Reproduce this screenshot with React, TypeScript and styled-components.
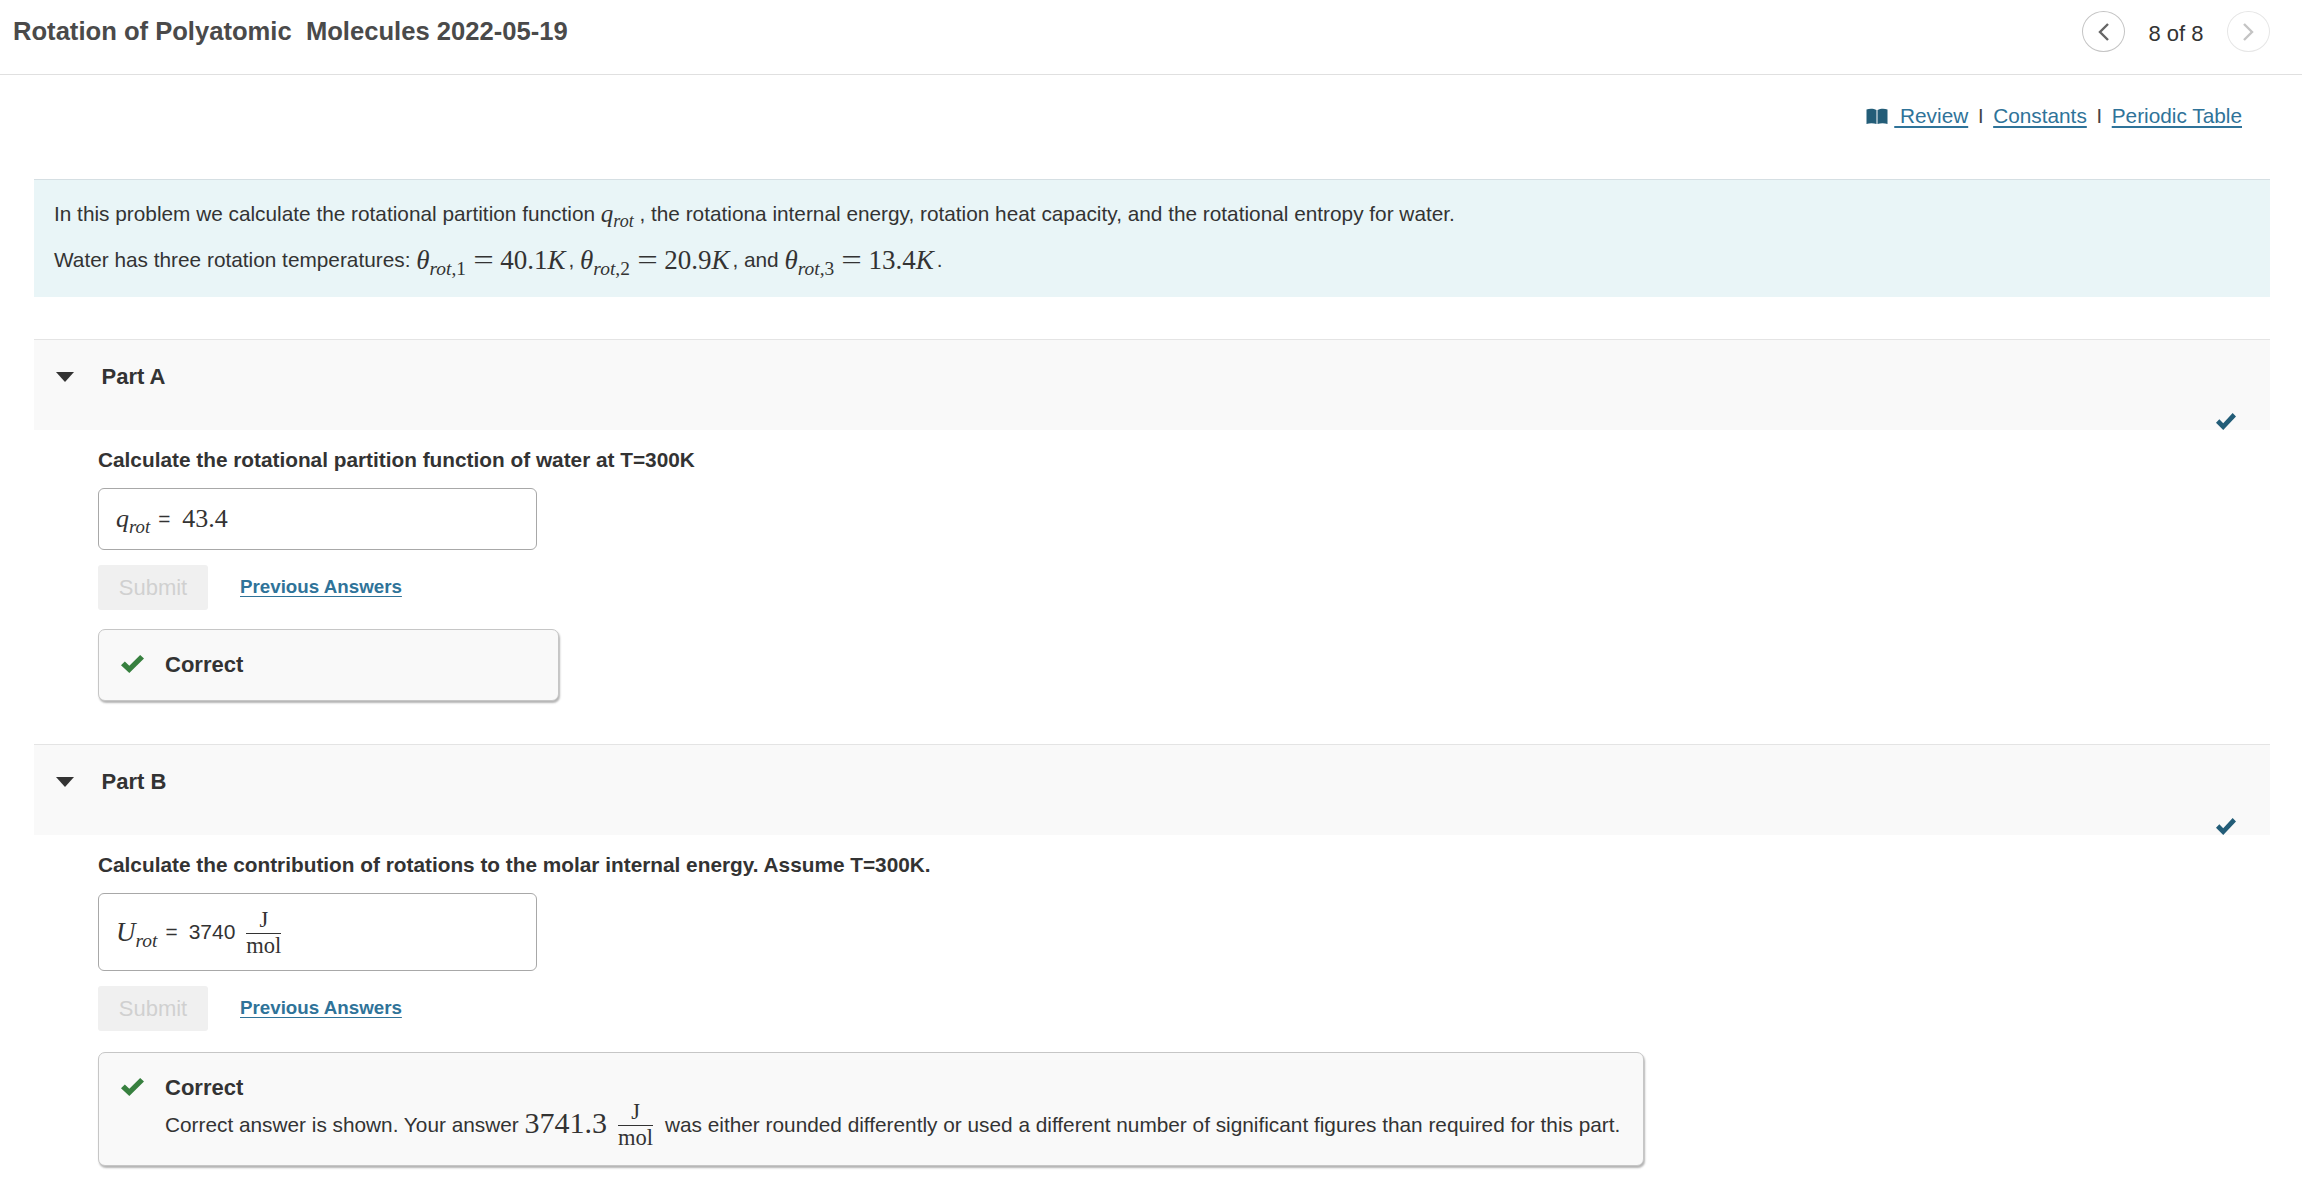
import styled, { createGlobalStyle } from "styled-components";

const GlobalStyle = createGlobalStyle`
  html, body {
    margin: 0;
    padding: 0;
    background: #fff;
  }
  body {
    font-family: "Liberation Sans", Arial, sans-serif;
    color: #333;
  }
`;

const Page = styled.div`
  width: 2302px;
  height: 1202px;
  overflow: hidden;
`;

const TopBar = styled.header`
  height: 75px;
  box-sizing: border-box;
  border-bottom: 1px solid #e0e0e0;
  padding: 11px 32px 0 13px;
  display: flex;
  justify-content: space-between;
  align-items: flex-start;
`;

const Title = styled.h1`
  margin: 4px 0 0;
  font-size: 25.6px;
  line-height: 32px;
  font-weight: bold;
  white-space: pre;
  color: #4a4a4a;
`;

const Pager = styled.div`
  display: flex;
  align-items: flex-start;
  width: 188px;
  justify-content: space-between;
`;

const RoundButton = styled.button<{ $off?: boolean }>`
  width: 43px;
  height: 41px;
  padding: 0;
  border-radius: 50%;
  background: #fff;
  border: 1px solid ${(p) => (p.$off ? "#e6e6e6" : "#c4c4c4")};
  color: ${(p) => (p.$off ? "#c4c4c4" : "#666")};
  display: flex;
  align-items: center;
  justify-content: center;
`;

const PageCount = styled.span`
  font-size: 22px;
  line-height: 24px;
  margin-top: 11px;
  color: #333;
`;

const Content = styled.main`
  padding: 0 32px 0 34px;
`;

const ToolLinks = styled.div`
  height: 104px;
  box-sizing: border-box;
  padding: 29px 28px 0 0;
  display: flex;
  justify-content: flex-end;
  align-items: flex-start;
  font-size: 20.8px;
  line-height: 24px;
`;

const ToolLink = styled.a`
  color: #2f7399;
  text-decoration: underline;
  text-underline-offset: 3px;
  display: inline-flex;
  align-items: center;
  white-space: pre;
`;

const Divider = styled.span`
  color: #444;
  margin: 0 9.7px;
  font-size: 20px;
`;

const BookIcon = styled.svg`
  width: 22px;
  height: 17px;
  margin-right: 6px;
  color: #235d78;
`;

const InfoBox = styled.section`
  height: 118px;
  box-sizing: border-box;
  background: #e9f5f7;
  border-top: 1px solid #d5dfe3;
  padding: 11px 20px 0;
  font-size: 20.8px;
  color: #333;
`;

const InfoLine = styled.div`
  height: 46px;
  display: flex;
  align-items: center;
  white-space: pre;
`;

const MathText = styled.span<{ $size?: number }>`
  font-family: "Liberation Serif", "Times New Roman", serif;
  font-size: ${(p) => p.$size ?? 27}px;
  color: #333;
  white-space: pre;
`;

const NoteValue = styled(MathText)`
  margin-top: -3px;
`;

const Var = styled.i`
  font-style: italic;
`;

const Sub = styled.sub`
  font-size: 0.72em;
  font-style: italic;
  line-height: 0;
  vertical-align: -0.3em;
`;

const Upright = styled.span`
  font-style: normal;
`;

const Rel = styled.span`
  display: inline-block;
  margin: 0 9px 0 10px;
  transform: scaleX(1.35);
`;

const Comma = styled.span`
  margin: 0 0 0 3px;
`;

const Part = styled.section<{ $top: number }>`
  margin-top: ${(p) => p.$top}px;
`;

const PartHead = styled.div`
  position: relative;
  height: 91px;
  box-sizing: border-box;
  background: #f9f9f9;
  border-top: 1px solid #e4e4e4;
  padding: 23px 0 0 22px;
  display: flex;
  align-items: flex-start;
`;

const Caret = styled.span`
  width: 0;
  height: 0;
  margin-top: 9px;
  border-left: 9px solid transparent;
  border-right: 9px solid transparent;
  border-top: 10px solid #333;
`;

const PartLabel = styled.h2`
  margin: 0 0 0 27.5px;
  font-size: 22px;
  line-height: 28px;
  font-weight: bold;
  color: #333;
`;

const DoneMark = styled.svg`
  position: absolute;
  right: 34px;
  bottom: 0;
  width: 20px;
  height: 17px;
  color: #235d78;
`;

const PartBody = styled.div`
  padding: 0 0 0 64px;
`;

const Question = styled.p`
  margin: 0;
  height: 58px;
  box-sizing: border-box;
  padding-top: 18px;
  font-size: 20.8px;
  line-height: 24px;
  font-weight: bold;
  color: #333;
`;

const AnswerField = styled.div<{ $h: number }>`
  width: 439px;
  height: ${(p) => p.$h}px;
  box-sizing: border-box;
  border: 1px solid #a8a8a8;
  border-radius: 6px;
  background: #fff;
  padding: 0 17px;
  display: flex;
  align-items: center;
  white-space: pre;
`;

const Equals = styled.span<{ $after?: number }>`
  font-size: 20.8px;
  margin: 0 ${(p) => p.$after ?? 11}px 0 8px;
`;

const SansValue = styled.span`
  font-size: 21px;
  margin-right: 11px;
`;

const Fraction = styled.span`
  display: inline-flex;
  flex-direction: column;
  align-items: center;
  vertical-align: middle;
  font-family: "Liberation Serif", "Times New Roman", serif;
  font-size: 22.5px;
  line-height: 24px;
  color: #333;
  margin-top: 1px;
`;

const Numer = styled.span`
  border-bottom: 1px solid #333;
  padding: 0 1px 1px;
  align-self: stretch;
  text-align: center;
`;

const ActionRow = styled.div`
  margin-top: 15px;
  display: flex;
  align-items: center;
  gap: 32px;
`;

const SubmitButton = styled.button`
  width: 110px;
  height: 45px;
  border: none;
  border-radius: 3px;
  background: #f0f0f0;
  color: #d0d0d0;
  font-family: inherit;
  font-size: 22px;
  padding: 0;
`;

const PrevAnswers = styled.a`
  color: #2f7399;
  font-size: 18.75px;
  font-weight: bold;
  text-decoration: underline;
  text-underline-offset: 3px;
  margin-top: -1px;
`;

const Feedback = styled.div<{ $w: number; $h: number; $top: number }>`
  width: ${(p) => p.$w}px;
  height: ${(p) => p.$h}px;
  margin-top: ${(p) => p.$top}px;
  box-sizing: border-box;
  background: #f9f9f9;
  border: 1px solid #c6c6c6;
  border-radius: 7px;
  box-shadow: 1px 2px 2px #b5b5b5;
  padding: 21px 0 0 22px;
  display: flex;
  align-items: flex-start;
`;

const GreenCheck = styled.svg`
  flex: none;
  width: 23px;
  height: 18px;
  margin-top: 4px;
  color: #37803f;
`;

const FeedbackText = styled.div`
  margin-left: 21px;
`;

const FeedbackTitle = styled.div`
  font-size: 22px;
  line-height: 28px;
  font-weight: bold;
  color: #333;
`;

const FeedbackNote = styled.div`
  font-size: 20.8px;
  line-height: 24px;
  margin-top: -3px;
  display: flex;
  align-items: center;
  white-space: pre;
  color: #333;
`;

const NoteFraction = styled(Fraction)`
  margin: 1px 12px 0 11px;
`;

const checkPath = "M2 10.5 L5 7.5 L8.5 11 L17 2 L20 5 L8.5 17 Z";

function Check() {
  return (
    <GreenCheck viewBox="2 2 18 15" preserveAspectRatio="none">
      <path d={checkPath} fill="currentColor" />
    </GreenCheck>
  );
}

function PartCheck() {
  return (
    <DoneMark viewBox="2 2 18 15" preserveAspectRatio="none">
      <path d={checkPath} fill="currentColor" />
    </DoneMark>
  );
}

function Actions() {
  return (
    <ActionRow>
      <SubmitButton disabled>Submit</SubmitButton>
      <PrevAnswers href="#">Previous Answers</PrevAnswers>
    </ActionRow>
  );
}

export default function App() {
  return (
    <Page>
      <GlobalStyle />
      <TopBar>
        <Title>Rotation of Polyatomic  Molecules 2022-05-19</Title>
        <Pager>
          <RoundButton aria-label="Previous">
            <svg width="14" height="22" viewBox="0 0 14 22" fill="none">
              <path d="M11 3 L3 11 L11 19" stroke="currentColor" strokeWidth="2.4" />
            </svg>
          </RoundButton>
          <PageCount>8 of 8</PageCount>
          <RoundButton $off aria-label="Next">
            <svg width="14" height="22" viewBox="0 0 14 22" fill="none">
              <path d="M3 3 L11 11 L3 19" stroke="currentColor" strokeWidth="2.4" />
            </svg>
          </RoundButton>
        </Pager>
      </TopBar>
      <Content>
        <ToolLinks>
          <ToolLink href="#">
            <BookIcon viewBox="0 0 21 17">
              <path d="M0 1.5 C3 .5 7 .5 10 2 V16 C7 15 3 15 0 16 Z M11 2 C14 .5 18 .5 21 1.5 V16 C18 15 14 15 11 16 Z" fill="currentColor" />
            </BookIcon>
            {" Review"}
          </ToolLink>
          <Divider>I</Divider>
          <ToolLink href="#">Constants</ToolLink>
          <Divider>I</Divider>
          <ToolLink href="#">Periodic Table</ToolLink>
        </ToolLinks>

        <InfoBox>
          <InfoLine>
            {"In this problem we calculate the rotational partition function "}
            <MathText $size={25}>
              <Var>q</Var>
              <Sub>rot</Sub>
            </MathText>
            {" , the rotationa internal energy, rotation heat capacity, and the rotational entropy for water."}
          </InfoLine>
          <InfoLine>
            {"Water has three rotation temperatures: "}
            <MathText>
              <Var>θ</Var>
              <Sub>
                rot<Upright>,1</Upright>
              </Sub>
              <Rel>=</Rel>
              {"40.1"}
              <Var>K</Var>
            </MathText>
            <Comma>{", "}</Comma>
            <MathText>
              <Var>θ</Var>
              <Sub>
                rot<Upright>,2</Upright>
              </Sub>
              <Rel>=</Rel>
              {"20.9"}
              <Var>K</Var>
            </MathText>
            <Comma>{", and "}</Comma>
            <MathText>
              <Var>θ</Var>
              <Sub>
                rot<Upright>,3</Upright>
              </Sub>
              <Rel>=</Rel>
              {"13.4"}
              <Var>K</Var>
            </MathText>
            <Comma>.</Comma>
          </InfoLine>
        </InfoBox>

        <Part $top={42}>
          <PartHead>
            <Caret />
            <PartLabel>Part A</PartLabel>
            <PartCheck />
          </PartHead>
          <PartBody>
            <Question>Calculate the rotational partition function of water at T=300K</Question>
            <AnswerField $h={62}>
              <MathText $size={26}>
                <Var>q</Var>
                <Sub>rot</Sub>
              </MathText>
              <Equals $after={12}>=</Equals>
              <MathText $size={26}>43.4</MathText>
            </AnswerField>
            <Actions />
            <Feedback $w={461} $h={72} $top={19}>
              <Check />
              <FeedbackText>
                <FeedbackTitle>Correct</FeedbackTitle>
              </FeedbackText>
            </Feedback>
          </PartBody>
        </Part>

        <Part $top={43}>
          <PartHead>
            <Caret />
            <PartLabel>Part B</PartLabel>
            <PartCheck />
          </PartHead>
          <PartBody>
            <Question>Calculate the contribution of rotations to the molar internal energy. Assume T=300K.</Question>
            <AnswerField $h={78}>
              <MathText>
                <Var>U</Var>
                <Sub>rot</Sub>
              </MathText>
              <Equals>=</Equals>
              <SansValue>3740</SansValue>
              <Fraction>
                <Numer>J</Numer>
                <span>mol</span>
              </Fraction>
            </AnswerField>
            <Actions />
            <Feedback $w={1546} $h={114} $top={21}>
              <Check />
              <FeedbackText>
                <FeedbackTitle>Correct</FeedbackTitle>
                <FeedbackNote>
                  {"Correct answer is shown. Your answer "}
                  <NoteValue $size={30}>3741.3</NoteValue>
                  <NoteFraction>
                    <Numer>J</Numer>
                    <span>mol</span>
                  </NoteFraction>
                  {"was either rounded differently or used a different number of significant figures than required for this part."}
                </FeedbackNote>
              </FeedbackText>
            </Feedback>
          </PartBody>
        </Part>
      </Content>
    </Page>
  );
}
